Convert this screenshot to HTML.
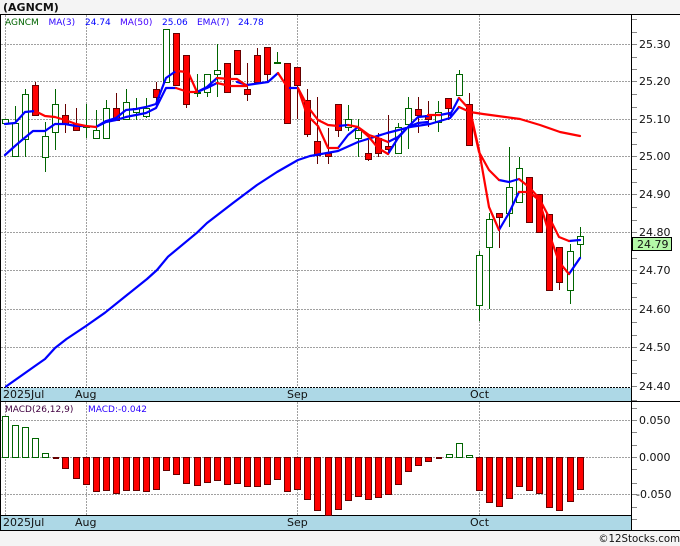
<!DOCTYPE html>
<html><head><meta charset="utf-8"><style>
html,body{margin:0;padding:0;background:#f4f4f4;width:680px;height:546px;overflow:hidden}
svg{display:block}
text{font-family:"DejaVu Sans",sans-serif;font-size:11px;fill:#111}
.l text{font-size:9px}
.c{shape-rendering:crispEdges}
</style></head><body>
<svg width="680" height="546" viewBox="0 0 680 546" xmlns="http://www.w3.org/2000/svg">
<rect x="0" y="14" width="680" height="517" fill="#fff"/>
<g class="c">
<path fill="none" stroke="#a0a0a0" stroke-dasharray="2 1" d="M5.5 15V387M86.5 15V387M297.5 15V387M479.5 15V387M5.5 402V515M86.5 402V515M297.5 402V515M479.5 402V515"/>
<path fill="none" stroke="#a0a0a0" stroke-dasharray="2 1" d="M1 44.5H632M1 81.5H632M1 119.5H632M1 156.5H632M1 194.5H632M1 232.5H632M1 270.5H632M1 309.5H632M1 347.5H632M1 420.5H632M1 457.5H632M1 494.5H632"/>
<rect x="1" y="388" width="631" height="13" fill="#add8e6"/>
<rect x="1" y="516" width="631" height="14" fill="#add8e6"/>
<path fill="none" stroke="#000" d="M0 14.5H680M0 401.5H680M0 515.5H632M0 530.5H680M0.5 14V531M631.5 14V531"/>
<path fill="none" stroke="#000" stroke-dasharray="2 1" d="M1 387.5H632"/>
<path fill="none" stroke="#888" d="M632 19.5h5M632 32.5h5M632 44.5h5M632 57.5h5M632 69.5h5M632 81.5h5M632 94.5h5M632 107.5h5M632 119.5h5M632 132.5h5M632 144.5h5M632 156.5h5M632 169.5h5M632 182.5h5M632 194.5h5M632 207.5h5M632 220.5h5M632 232.5h5M632 246.5h5M632 258.5h5M632 270.5h5M632 283.5h5M632 297.5h5M632 309.5h5M632 322.5h5M632 335.5h5M632 347.5h5M632 360.5h5M632 373.5h5M632 386.5h5M632 400.5h5M632 408.5h5M632 420.5h5M632 432.5h5M632 445.5h5M632 457.5h5M632 469.5h5M632 483.5h5M632 494.5h5M632 507.5h5M632 519.5h5"/>
<!-- green wicks -->
<path fill="none" stroke="#006400" d="M15.5 106V157M25.5 89V157M45.5 122V172M55.5 89V150M86.5 104V138M96.5 110V138M106.5 100V138M126.5 89V119M136.5 98V120M146.5 98V118M197.5 74V97M207.5 74V97M217.5 44V97M277.5 52V63M348.5 105V131M358.5 119V157M398.5 123V153M408.5 97V149M438.5 101V132M459.5 70V95M479.5 251V321M489.5 213V309M509.5 147V227M519.5 157V202M570.5 244V304M580.5 227V258"/>
<!-- red wicks -->
<path fill="none" stroke="#660000" d="M35.5 82V116M65.5 104V133M76.5 108V131M116.5 93V120M156.5 82V105M186.5 104V108M247.5 63V101M257.5 48V82M267.5 74V82M297.5 85V119M307.5 89V137M317.5 97V164M328.5 128V164M338.5 130V137M368.5 140V161M378.5 133V157M388.5 115V154M418.5 97V133M428.5 101V127M448.5 98V120M469.5 93V104M499.5 213V248M559.5 282V290"/>
<!-- green bodies -->
<path fill="#fff" stroke="#006400" d="M2.5 119.5h6v4h-6zM12.5 123.5h6v33h-6zM22.5 94.5h6v45h-6zM42.5 136.5h6v21h-6zM52.5 104.5h6v28h-6zM83.5 126.5h6v1h-6zM93.5 130.5h6v8h-6zM103.5 108.5h6v30h-6zM123.5 102.5h6v17h-6zM133.5 108.5h6v4h-6zM143.5 108.5h6v8h-6zM163.5 29.5h6v53h-6zM194.5 92.5h6v1h-6zM204.5 74.5h6v18h-6zM214.5 70.5h6v4h-6zM274.5 62.5h6v1h-6zM345.5 119.5h6v8h-6zM355.5 130.5h6v8h-6zM395.5 127.5h6v26h-6zM405.5 108.5h6v16h-6zM435.5 112.5h6v10h-6zM456.5 74.5h6v21h-6zM476.5 255.5h6v50h-6zM486.5 219.5h6v28h-6zM506.5 187.5h6v26h-6zM516.5 168.5h6v34h-6zM567.5 251.5h6v39h-6zM577.5 236.5h6v8h-6z"/>
<!-- red bodies -->
<path fill="#f00" stroke="#660000" d="M32.5 85.5h6v30h-6zM62.5 115.5h6v9h-6zM73.5 124.5h6v6h-6zM113.5 108.5h6v12h-6zM153.5 89.5h6v8h-6zM173.5 33.5h6v52h-6zM183.5 55.5h6v49h-6zM224.5 63.5h6v29h-6zM234.5 50.5h6v24h-6zM244.5 89.5h6v5h-6zM254.5 55.5h6v27h-6zM264.5 47.5h6v27h-6zM284.5 63.5h6v60h-6zM294.5 67.5h6v18h-6zM304.5 100.5h6v34h-6zM314.5 141.5h6v14h-6zM325.5 153.5h6v3h-6zM335.5 104.5h6v26h-6zM365.5 153.5h6v6h-6zM375.5 138.5h6v15h-6zM385.5 146.5h6v3h-6zM415.5 109.5h6v6h-6zM425.5 115.5h6v4h-6zM445.5 98.5h6v10h-6zM466.5 104.5h6v41h-6zM496.5 213.5h6v4h-6zM526.5 177.5h6v45h-6zM536.5 194.5h6v38h-6zM546.5 214.5h6v76h-6zM556.5 247.5h6v35h-6z"/>
<!-- MACD green -->
<path fill="#fff" stroke="#006400" d="M2.5 416.5h6v41h-6zM12.5 425.5h6v32h-6zM22.5 427.5h6v30h-6zM32.5 438.5h6v19h-6zM42.5 453.5h6v4h-6zM446.5 454.5h6v3h-6zM456.5 443.5h6v14h-6zM466.5 455.5h6v2h-6z"/>
<!-- MACD red -->
<path fill="#f00" stroke="#660000" d="M62.5 457.5h6v11h-6zM73.5 457.5h6v21h-6zM83.5 457.5h6v27h-6zM93.5 457.5h6v34h-6zM103.5 457.5h6v33h-6zM113.5 457.5h6v36h-6zM123.5 457.5h6v33h-6zM133.5 457.5h6v33h-6zM143.5 457.5h6v34h-6zM153.5 457.5h6v32h-6zM163.5 457.5h6v13h-6zM173.5 457.5h6v17h-6zM183.5 457.5h6v26h-6zM194.5 457.5h6v28h-6zM204.5 457.5h6v25h-6zM214.5 457.5h6v23h-6zM224.5 457.5h6v27h-6zM234.5 457.5h6v26h-6zM244.5 457.5h6v29h-6zM254.5 457.5h6v29h-6zM264.5 457.5h6v27h-6zM274.5 457.5h6v22h-6zM284.5 457.5h6v34h-6zM294.5 457.5h6v32h-6zM304.5 457.5h6v42h-6zM314.5 457.5h6v53h-6zM325.5 457.5h6v58h-6zM335.5 457.5h6v52h-6zM345.5 457.5h6v43h-6zM355.5 457.5h6v39h-6zM365.5 457.5h6v42h-6zM375.5 457.5h6v40h-6zM385.5 457.5h6v37h-6zM395.5 457.5h6v27h-6zM405.5 457.5h6v14h-6zM415.5 457.5h6v8h-6zM425.5 457.5h6v4h-6zM476.5 457.5h6v33h-6zM486.5 457.5h6v45h-6zM496.5 457.5h6v49h-6zM506.5 457.5h6v41h-6zM516.5 457.5h6v29h-6zM526.5 457.5h6v33h-6zM536.5 457.5h6v36h-6zM546.5 457.5h6v50h-6zM556.5 457.5h6v53h-6zM567.5 457.5h6v44h-6zM577.5 457.5h6v32h-6z"/>
<path fill="none" stroke="#660000" stroke-width="2" d="M53 458h6M436 458h6"/>
</g>
<!-- lines -->
<g fill="none" stroke-width="2.2" stroke-linejoin="round" stroke-linecap="round">
<path stroke="#00f" d="M6 386.5L35 366L45 359L55 348L66.5 339L86 326L105 312.7L127 295L147 279L157 270L168 256.7L197 232.7L207 223L233 203L257 185L277 172L298 160L310 156L338 151L358 142L387 133L410 127L430 124L450 118L459 107M5 155L15 146L22 140L33 131L45 131L55 124L65 124L76 126L86 126M96 127L106 122L116 120L126 117L136 115L146 113L156 108L166 88L176 88M197 92L207 88L217 83M237 82L247 85L268 82L278 73M338 148L348 135L358 127M388 142L398 137L408 127L418 123L428 122M440 115L450 113M5 124L15 123L25 112L35 111M96 127L106 121L116 118L126 110L136 109L146 107L156 104L166 78L176 71M197 92L207 87L217 78M288 88L298 88M338 126L348 125M388 154L398 138L408 127L418 117L428 116M450 115L459 98M499 180L509 182L519 179M499 230L509 213L519 192M569 241L580 240M569 274L580 258"/>
<path stroke="#f00" d="M459 107L470 112L483 114L520 119L540 125L560 132L580 136M35 111L45 116L55 117L65 120L76 124L86 126L96 127M176 88L188 92L197 92M217 83L230 86L247 86M176 71L188 72L197 92M217 78L230 79L237 79L247 86M278 73L288 88M298 88L308 107L318 120L328 125L338 126M298 88L307 115L318 126L328 148L338 148M348 125L358 127L369 135L378 138L388 142M358 127L369 137L378 148L388 154M428 115L440 115M459 98L470 110L479 150L489 207L499 230M470 112L479 152L489 170L499 180M519 179L529 187L539 198L549 217L559 237L569 241M519 192L529 192L539 200L549 233L559 262L569 274"/>
</g>
<rect x="632.5" y="237.5" width="39" height="13" fill="#b4f8a8" stroke="#000" shape-rendering="crispEdges"/>
<!-- labels -->
<text x="3" y="11" style="font-weight:bold">(AGNCM)</text>
<g class="l">
<text x="5" y="25" style="fill:#006400">AGNCM</text>
<text x="48.5" y="25" style="fill:#2a00ff">MA(3)</text>
<text x="85" y="25" style="fill:#0000ff">24.74</text>
<text x="120" y="25" style="fill:#4400ff">MA(50)</text>
<text x="162" y="25" style="fill:#0000ff">25.06</text>
<text x="197" y="25" style="fill:#2a00ff">EMA(7)</text>
<text x="238" y="25" style="fill:#0000ff">24.78</text>
<text x="5" y="412" style="fill:#400040">MACD(26,12,9)</text>
<text x="88" y="412" style="fill:#2a00ff">MACD:-0.042</text>
</g>
<text x="639" y="48">25.30</text>
<text x="639" y="85">25.20</text>
<text x="639" y="123">25.10</text>
<text x="639" y="160">25.00</text>
<text x="639" y="198">24.90</text>
<text x="639" y="236">24.80</text>
<text x="637" y="248">24.79</text>
<text x="639" y="274">24.70</text>
<text x="639" y="313">24.60</text>
<text x="639" y="351">24.50</text>
<text x="639" y="390">24.40</text>
<text x="639" y="424">0.050</text>
<text x="639" y="461">0.000</text>
<text x="636" y="498">-0.050</text>
<text x="3" y="398">2025Jul</text><text x="75" y="398">Aug</text><text x="287" y="398">Sep</text><text x="470" y="398">Oct</text>
<text x="3" y="526">2025Jul</text><text x="75" y="526">Aug</text><text x="287" y="526">Sep</text><text x="470" y="526">Oct</text>
<text x="680" y="542" text-anchor="end" style="font-size:10.2px">©12Stocks.com</text>
</svg>
</body></html>
